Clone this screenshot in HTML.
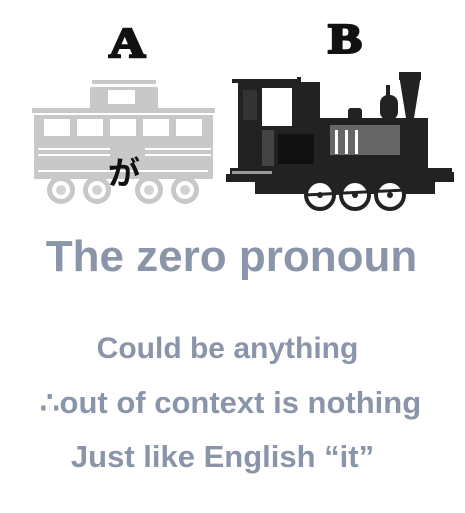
<!DOCTYPE html>
<html><head><meta charset="utf-8"><style>
body{margin:0;width:465px;height:513px;background:#fff;overflow:hidden;position:relative;font-family:"Liberation Sans",sans-serif}
.t{position:absolute;color:#8b95aa;font-weight:bold;white-space:nowrap;left:0;width:465px;text-align:center}
.L{position:absolute;font-family:"Liberation Serif",serif;font-weight:900;font-size:42px;color:#111;transform:scaleX(1.2);-webkit-text-stroke:2.5px #111}
</style></head><body>
<div class="L" style="left:112px;top:20px">A</div>
<div class="L" style="left:331px;top:16px">B</div>
<svg width="465" height="230" style="position:absolute;left:0;top:0">
<g fill="#c8c8c8">
<rect x="92" y="80" width="64" height="4"/>
<rect x="90" y="87" width="68" height="22"/>
<rect x="32" y="108" width="183" height="5"/>
<rect x="34" y="115" width="179" height="58"/>
<rect x="34" y="173" width="179" height="6"/>
<circle cx="61" cy="190" r="14"/><circle cx="97" cy="190" r="14"/><circle cx="149" cy="190" r="14"/><circle cx="185" cy="190" r="14"/>
</g>
<g fill="#fff">
<rect x="108" y="90" width="27" height="14"/>
<rect x="44" y="119" width="26" height="17"/><rect x="77" y="119" width="26" height="17"/><rect x="110" y="119" width="26" height="17"/><rect x="143" y="119" width="26" height="17"/><rect x="176" y="119" width="26" height="17"/>
<rect x="38" y="148" width="72" height="2"/><rect x="38" y="154" width="72" height="2"/>
<rect x="145" y="148" width="66" height="2"/><rect x="145" y="154" width="66" height="2"/>
<rect x="38" y="170" width="170" height="2"/>
<circle cx="61" cy="190" r="9"/><circle cx="97" cy="190" r="9"/><circle cx="149" cy="190" r="9"/><circle cx="185" cy="190" r="9"/>
</g>
<g fill="#d2d2d2"><circle cx="61" cy="190" r="5"/><circle cx="97" cy="190" r="5"/><circle cx="149" cy="190" r="5"/><circle cx="185" cy="190" r="5"/></g>
<text x="108" y="184" font-family="Noto Sans CJK JP,sans-serif" font-weight="bold" font-size="32" fill="#111">が</text>
<g fill="#222">
<rect x="232" y="79" width="66" height="4"/>
<rect x="297" y="77" width="4" height="6"/>
<rect x="238" y="82" width="82" height="92"/>
<rect x="318" y="118" width="110" height="52"/>
<rect x="399" y="72" width="22" height="8"/>
<polygon points="399,75 421,75 414,118 406,118"/>
<rect x="380" y="95" width="18" height="25" rx="8"/>
<rect x="386" y="85" width="4" height="12"/>
<rect x="348" y="108" width="14" height="12" rx="3"/>
<rect x="230" y="168" width="222" height="14"/>
<rect x="226" y="174" width="10" height="8"/>
<rect x="446" y="172" width="8" height="10"/>
<rect x="255" y="182" width="180" height="12"/>
</g>
<g fill="#fff">
<rect x="262" y="88" width="30" height="38"/>
<rect x="262" y="130" width="12" height="36" fill="#444"/>
<rect x="278" y="134" width="36" height="30" fill="#111"/>
<rect x="243" y="90" width="14" height="30" fill="#333"/>
<rect x="330" y="125" width="70" height="30" fill="#666"/>
<rect x="335" y="130" width="3" height="24"/><rect x="345" y="130" width="3" height="24"/><rect x="355" y="130" width="3" height="24"/>
<rect x="232" y="171" width="40" height="3" fill="#999"/>
</g>
<g fill="none" stroke="#222" stroke-width="4">
<circle cx="320" cy="195" r="14" fill="#fff"/><circle cx="355" cy="195" r="14" fill="#fff"/><circle cx="390" cy="195" r="14" fill="#fff"/>
</g>
<line x1="305" y1="195" x2="405" y2="190" stroke="#222" stroke-width="3"/>
<circle cx="320" cy="195" r="3" fill="#222"/><circle cx="355" cy="195" r="3" fill="#222"/><circle cx="390" cy="195" r="3" fill="#222"/>
</svg>
<div class="t" style="top:232px;font-size:44px;left:-1px">The zero pronoun</div>
<div class="t" style="top:332px;font-size:30px;left:-5px">Could be anything</div>
<div class="t" style="top:385px;font-size:31px;left:-2px">∴out of context is nothing</div>
<div class="t" style="top:439px;font-size:31px;left:-10px">Just like English “it”</div>
</body></html>
